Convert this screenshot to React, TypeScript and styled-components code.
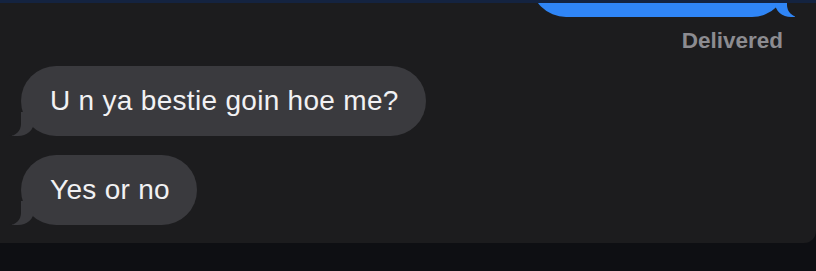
import React from "react";
import styled, { createGlobalStyle } from "styled-components";

const PANEL = "#1c1c1e";
const RECEIVED = "#3a3a3e";
const SENT = "#2f85f6";

const Global = createGlobalStyle`
  html, body { margin: 0; padding: 0; background: #0e0f13; }
  body { font-family: "Liberation Sans", Arial, sans-serif; }
  #root { width: 816px; height: 271px; overflow: hidden; }
`;

const Panel = styled.div`
  position: relative;
  width: 816px;
  height: 243px;
  background: ${PANEL};
  border-bottom-right-radius: 12px;
  border-top: 3px solid #142340;
  box-sizing: border-box;
  overflow: hidden;
  display: flex;
  flex-direction: column;
`;

const SentRow = styled.div`
  display: flex;
  justify-content: flex-end;
  padding-right: 29px;
  height: 14px;
  align-items: flex-end;
`;

const SentBubble = styled.div`
  position: relative;
  width: 256px;
  height: 70px;
  flex: none;
  background: ${SENT};
  border-radius: 35px;
  &::before {
    content: "";
    position: absolute;
    bottom: 0;
    right: -8px;
    width: 20px;
    height: 22px;
    background: ${SENT};
    border-bottom-left-radius: 16px 14px;
  }
  &::after {
    content: "";
    position: absolute;
    bottom: 0;
    right: -26px;
    width: 26px;
    height: 22px;
    background: ${PANEL};
    border-bottom-left-radius: 12px;
  }
`;

const Status = styled.div`
  align-self: flex-end;
  margin-right: 33px;
  margin-top: 11px;
  font-size: 22.5px;
  line-height: 26px;
  font-weight: 700;
  color: #8c8c91;
`;

const Thread = styled.div`
  display: flex;
  flex-direction: column;
  align-items: flex-start;
  gap: 19px;
  padding: 12px 0 0 21px;
`;

const Bubble = styled.div`
  position: relative;
  height: 70px;
  padding: 0 27px 0 29px;
  box-sizing: border-box;
  display: flex;
  align-items: center;
  background: ${RECEIVED};
  border-radius: 35px;
  color: #f1f1f3;
  font-size: 28px;
  letter-spacing: 0.3px;
  white-space: nowrap;
  &::before {
    content: "";
    position: absolute;
    bottom: 0;
    left: -9px;
    width: 22px;
    height: 24px;
    background: ${RECEIVED};
    border-bottom-right-radius: 16px 14px;
  }
  &::after {
    content: "";
    position: absolute;
    bottom: 0;
    left: -26px;
    width: 26px;
    height: 24px;
    background: ${PANEL};
    border-bottom-right-radius: 12px;
  }
`;

const Text = styled.span`
  position: relative;
  z-index: 1;
`;

export default function App() {
  return (
    <>
      <Global />
      <Panel>
        <SentRow>
          <SentBubble />
        </SentRow>
        <Status>Delivered</Status>
        <Thread>
          <Bubble>
            <Text>U n ya bestie goin hoe me?</Text>
          </Bubble>
          <Bubble>
            <Text>Yes or no</Text>
          </Bubble>
        </Thread>
      </Panel>
    </>
  );
}
